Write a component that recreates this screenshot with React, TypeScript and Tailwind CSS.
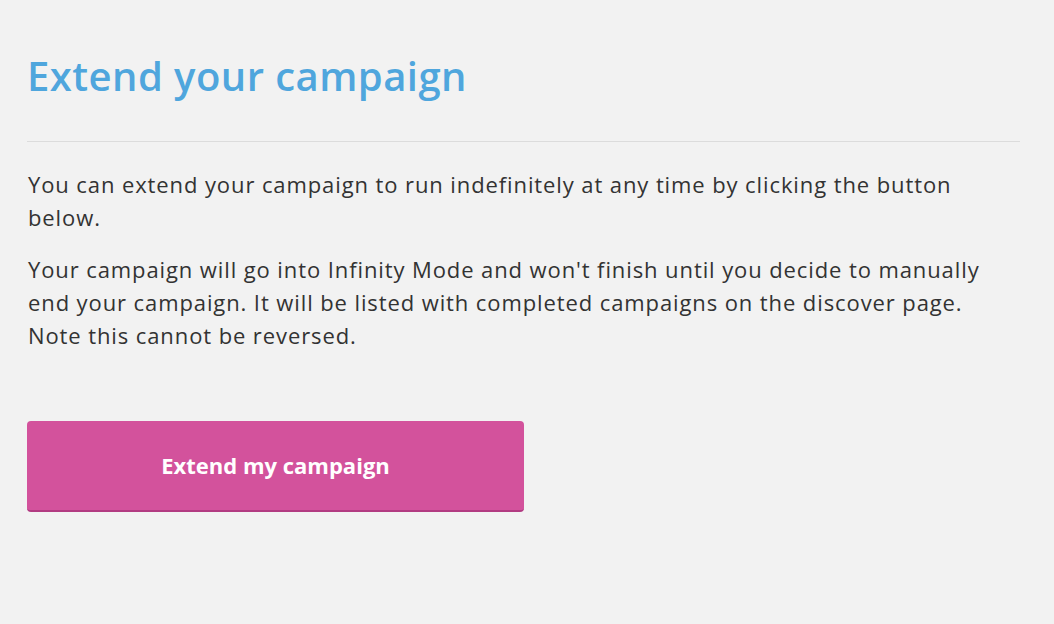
import React from "react";

export default function App() {
  return (
    <div
      className="min-h-[624px] w-full bg-[#f2f2f2] px-[27px] pt-[50px]"
      style={{ fontFamily: '"Open Sans", sans-serif' }}
    >
      <div className="w-[993px]">
        {/* Header */}
        <h1 className="text-[40px] font-semibold leading-[52px] tracking-[0.45px] text-[#4fa6dd]">
          Extend your campaign
        </h1>
        <div className="mt-[39px] h-px w-full bg-[#dcdcdc]" />

        {/* Body */}
        <div className="mt-[26px] w-[980px] text-[22px] leading-[33px] tracking-[0.9px] text-[#333333]">
          <p className="pl-px">
            You can extend your campaign to run indefinitely at any time by clicking the button
            below.
          </p>
          <p className="mt-[19px] pl-px">
            Your campaign will go into Infinity Mode and won't finish until you decide to manually
            end your campaign. It will be listed with completed campaigns on the discover page.
            Note this cannot be reversed.
          </p>
        </div>

        <button className="mt-[69px] flex h-[91px] w-[497px] cursor-pointer items-center justify-center rounded-[4px] border-b-2 border-[#b23b82] bg-[#d3529c] text-[22px] font-bold text-white">
          Extend my campaign
        </button>
      </div>
    </div>
  );
}
